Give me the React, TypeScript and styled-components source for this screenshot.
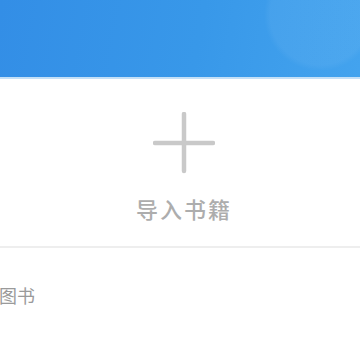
import styled, { createGlobalStyle } from "styled-components";

const GlobalStyle = createGlobalStyle`
  html, body {
    margin: 0;
    padding: 0;
    background: #ffffff;
    font-family: "Noto Sans CJK SC", "Noto Sans", sans-serif;
  }
`;

const Page = styled.div`
  width: 360px;
  height: 360px;
  overflow: hidden;
  background: #ffffff;
  display: flex;
  flex-direction: column;
`;

const Header = styled.div`
  height: 77px;
  flex-shrink: 0;
  background:
    radial-gradient(circle at 320px 15px, rgba(255, 255, 255, 0.05) 0, rgba(255, 255, 255, 0.05) 50px, transparent 56px),
    linear-gradient(100deg, #338ee6 0%, #3898e9 55%, #43a3ee 100%);
  border-bottom: 2px solid #c4e0f7;
`;

const ImportArea = styled.div`
  display: flex;
  flex-direction: column;
  align-items: center;
  padding: 33px 0 0 8px;
  height: 134px;
  border-bottom: 2px solid #eeeeee;
`;

const PlusIcon = styled.svg`
  width: 62px;
  height: 62px;
  display: block;
`;

const ImportLabel = styled.div`
  margin-top: 21px;
  font-size: 22px;
  font-weight: 500;
  line-height: 26px;
  letter-spacing: 2px;
  color: #adadad;
`;

const ListRow = styled.div`
  padding-top: 35px;
  margin-left: -37px;
  font-size: 18px;
  line-height: 24px;
  color: #9a9a9a;
`;

export default function App() {
  return (
    <>
      <GlobalStyle />
      <Page>
        <Header />
        <ImportArea>
          <PlusIcon viewBox="0 0 62 62">
            <path d="M31 2v57M2 31h58" stroke="#c9c9c9" strokeWidth="4.5" strokeLinecap="round" fill="none" />
          </PlusIcon>
          <ImportLabel>导入书籍</ImportLabel>
        </ImportArea>
        <ListRow>全部图书</ListRow>
      </Page>
    </>
  );
}
